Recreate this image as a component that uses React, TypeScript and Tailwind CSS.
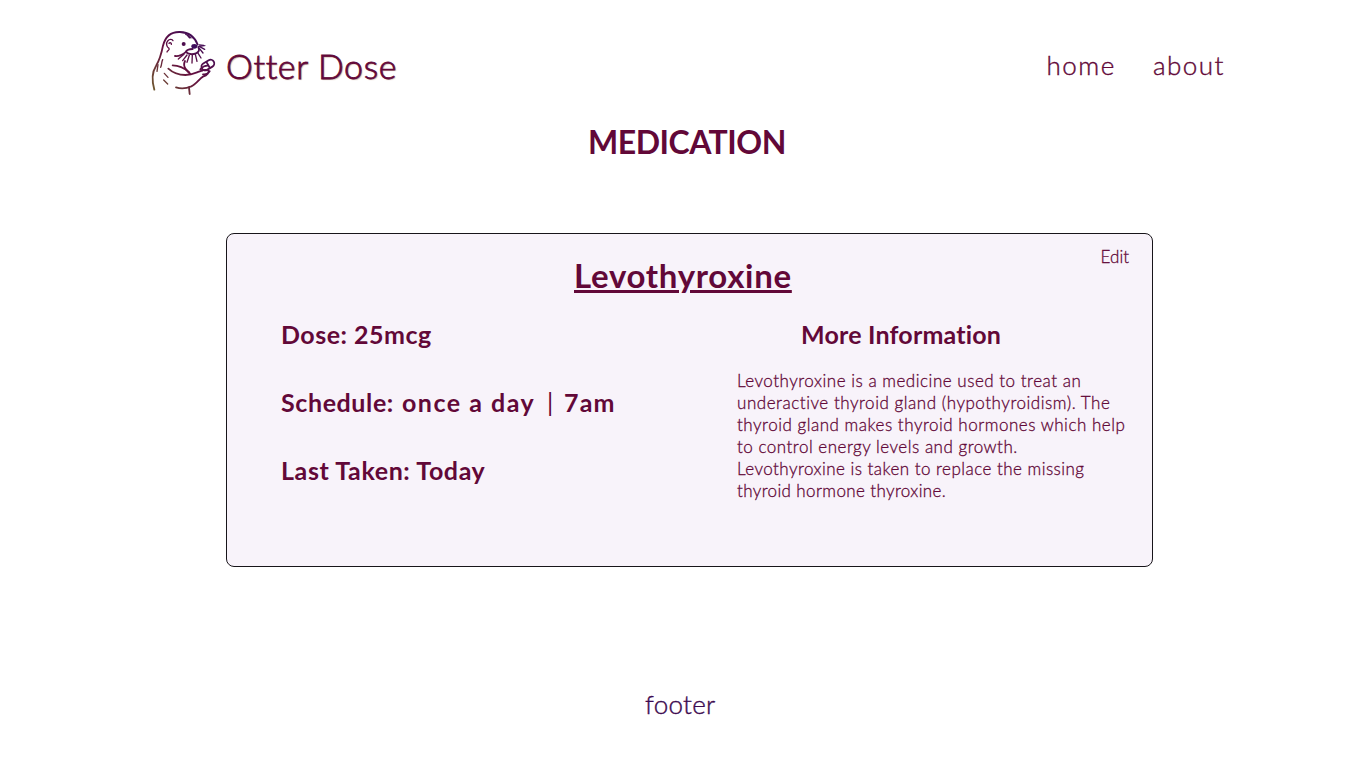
import React from 'react';

function OtterLogo() {
  return (
    <svg viewBox="0 0 240 240" className="h-20 w-20 shrink-0" fill="none" aria-hidden="true">
      <defs>
        <linearGradient id="ink" gradientUnits="userSpaceOnUse" x1="175" y1="35" x2="25" y2="200">
          <stop offset="0" stopColor="#3d0c5a" />
          <stop offset="0.5" stopColor="#65103f" />
          <stop offset="1" stopColor="#6f5a30" />
        </linearGradient>
      </defs>
      <g stroke="url(#ink)" strokeWidth="5.5" strokeLinecap="round" strokeLinejoin="round">
        <path d="M28 197C19 165 22 143 33 126C45 106 49 91 54 65C61 38 79 23 105 24C130 25 149 38 158 62" />
        <path d="M66 84C68 79 75 79 72 73C65 69 62 58 68 51C73 45 82 45 84 50M72 58C75 55 80 56 79 61" strokeWidth="4" />
        <path d="M122 31C129 33 134 37 138 42M127 34L134 42" strokeWidth="3.5" />
        <path d="M90 96C101 98 116 91 122 84C126 76 136 75 143 75M122 84C131 91 143 92 153 88C161 85 165 78 160 70" />
        <path d="M117 91L100 105M126 93L113 110M133 94L126 115M142 93L141 117M151 91L156 112M158 86L168 102M163 63L176 64M164 68L179 76M163 73L174 87" strokeWidth="4" />
        <path d="M160 68L180 65" strokeWidth="3" />
        <path d="M120 111C116 119 117 129 123 136C127 141 131 146 136 150" />
        <path d="M83 124C103 124 118 132 133 145M70 134C83 146 101 153 121 153C140 153 151 147 162 143L173 139" />
        <path d="M166 136C172 129 179 125 187 125M171 139C178 137 184 137 190 139C194 145 187 154 174 158C164 163 154 180 139 187C125 193 108 195 93 190M174 151C181 152 190 148 194 142" />
        <rect x="168" y="112" width="41" height="22" rx="11" transform="rotate(-31 189 123)" />
        <path d="M185 115L193 129" />
        <path d="M132 190L134 210" />
        <path d="M53 107C49 115 51 121 47 130M39 122L36 142M58 148L69 160M56 168L68 180" strokeWidth="4" />
      </g>
      <circle cx="116" cy="60" r="6" fill="#4d0d4e" />
      <ellipse cx="148" cy="67" rx="9" ry="7" fill="#3d0c5a" />
    </svg>
  );
}

const paragraph = [
  { text: 'Levothyroxine is a medicine used to treat an', cls: 'block tracking-[0.52px]' },
  { text: 'underactive thyroid gland (hypothyroidism). The', cls: 'block tracking-[0.54px]' },
  { text: 'thyroid gland makes thyroid hormones which help', cls: 'block tracking-[0.52px]' },
  { text: 'to control energy levels and growth.', cls: 'block tracking-[0.51px]' },
  { text: 'Levothyroxine is taken to replace the missing', cls: 'block tracking-[0.47px]' },
  { text: 'thyroid hormone thyroxine.', cls: 'block tracking-[0.38px]' },
];

export default function App() {
  return (
    <div className="flex h-screen flex-col overflow-hidden bg-white font-['Lato',sans-serif] text-[#620838] antialiased">
      <header className="flex h-[132px] shrink-0 items-center pl-[145px] pr-[141px]">
        <div className="flex items-center">
          <div className="-mt-1"><OtterLogo /></div>
          <span className="ml-px whitespace-nowrap text-[34px] leading-10 font-light tracking-[0.6px] [-webkit-text-stroke:0.8px] [text-shadow:1px_1px_1px_#cdb5a5]">Otter Dose</span>
        </div>
        <nav className="ml-auto flex gap-[37px] pb-0.5 text-[26px] leading-8 font-light tracking-[1.5px] [-webkit-text-stroke:0.4px]">
          <a>home</a>
          <a>about</a>
        </nav>
      </header>
      <h1 className="-mt-1.5 ml-[588px] h-8 shrink-0 whitespace-nowrap text-[32px] leading-8 font-bold tracking-[-0.5px]">MEDICATION</h1>
      <main className="mt-[75px] ml-[226px] h-[334px] w-[927px] shrink-0 rounded-lg border border-[#18151a] bg-[#f8f3fa]">
        <div className="flex h-[63px] justify-end pt-3 pr-[23px]">
          <h2 className="mt-[11px] mr-auto ml-[347px] text-[33px] leading-9 font-bold tracking-[0.7px] underline decoration-[3px] underline-offset-[2px]">Levothyroxine</h2>
          <a className="text-[17px] leading-[22px] font-light [-webkit-text-stroke:0.3px]">Edit</a>
        </div>
        <div className="flex pt-[23px] pl-[54px]">
          <div className="flex w-[456px] flex-col gap-10 whitespace-nowrap text-[25px] leading-7 font-bold">
            <p className="tracking-[0.5px]">Dose: 25mcg</p>
            <p className="flex">
              <span className="w-[121px] tracking-[0.6px]">Schedule:</span>
              <span className="w-[145px] tracking-[1.5px]">once a day</span>
              <span className="w-[17px] font-normal">|</span>
              <span className="tracking-[1.2px]">7am</span>
            </p>
            <p className="tracking-[0.6px]">Last Taken: Today</p>
          </div>
          <section>
            <h3 className="ml-16 text-[25px] leading-7 font-bold tracking-[0.2px] whitespace-nowrap">More Information</h3>
            <p className="mt-[22px] text-[17px] leading-[22px] font-light whitespace-nowrap [-webkit-text-stroke:0.3px]">
              {paragraph.map((l) => (
                <span key={l.text} className={l.cls}>{l.text}</span>
              ))}
            </p>
          </section>
        </div>
      </main>
      <footer className="mt-[121px] ml-[645px] text-[26px] leading-8 font-light tracking-[0.3px] text-[#3d0a50] [-webkit-text-stroke:0.4px]">footer</footer>
    </div>
  );
}
